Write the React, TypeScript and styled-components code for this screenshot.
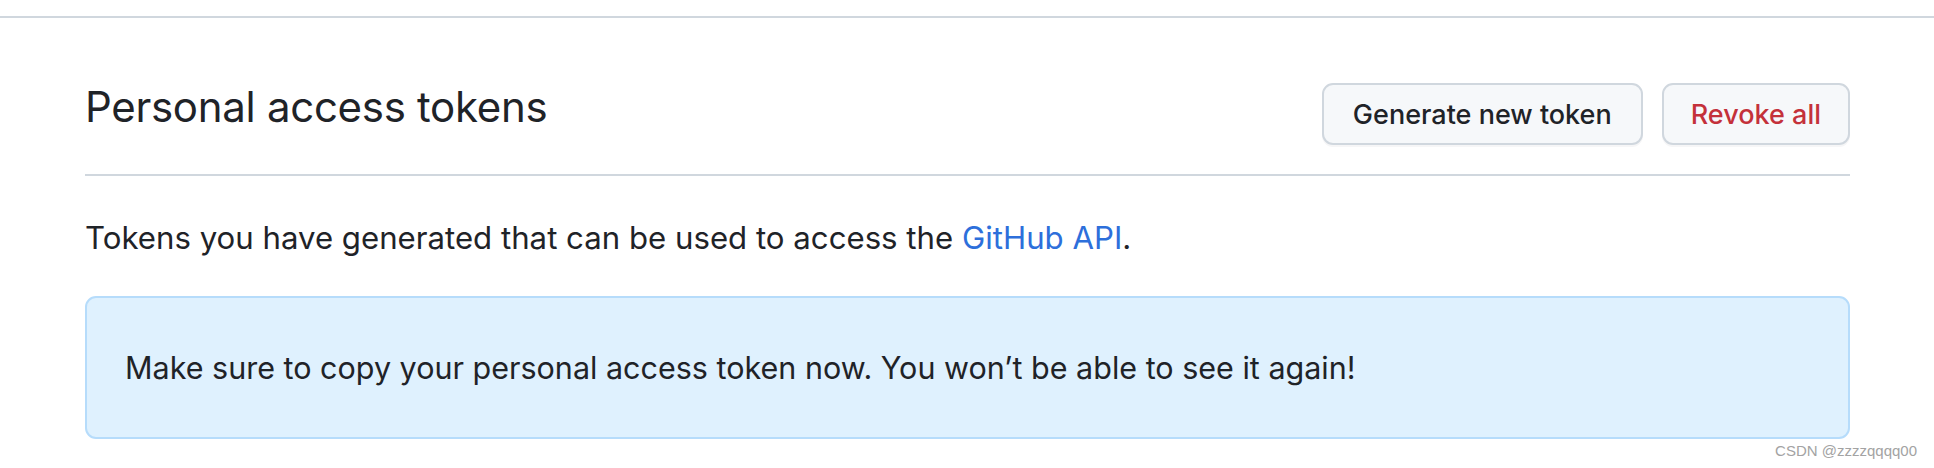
import React from 'react';
import styled, { createGlobalStyle } from 'styled-components';

const GlobalStyle = createGlobalStyle`
  html, body {
    margin: 0;
    padding: 0;
    background: #ffffff;
  }
  body {
    font-family: Inter, "Noto Sans", "Liberation Sans", sans-serif;
    color: #1f2328;
  }
`;

const Page = styled.div`
  position: relative;
  width: 1934px;
  height: 468px;
  overflow: hidden;
  background: #ffffff;
`;

const TopBar = styled.div`
  height: 16px;
  border-bottom: 2px solid #d0d7de;
`;

const Content = styled.main`
  width: 1765px;
  margin-left: 85px;
`;

const Subhead = styled.div`
  display: flex;
  justify-content: space-between;
  align-items: flex-start;
  padding-top: 61px;
  padding-bottom: 29px;
  border-bottom: 2px solid #d0d7de;
`;

const Heading = styled.h2`
  margin: 0;
  font-size: 42px;
  line-height: 56px;
  font-weight: 400;
  letter-spacing: -0.3px;
  color: #1f2328;
`;

const Actions = styled.div`
  display: flex;
  gap: 19px;
  padding-top: 4px;
`;

const Button = styled.button<{ $danger?: boolean }>`
  height: 62px;
  padding: 0 ${(p) => (p.$danger ? '27px' : '29px')};
  font-family: inherit;
  font-size: 27px;
  font-weight: 500;
  color: ${(p) => (p.$danger ? '#c4313a' : '#1f2328')};
  background: #f6f8fa;
  border: 2px solid #d0d7de;
  border-radius: 11px;
  box-shadow: 0 2px 0 rgba(31, 35, 40, 0.04);
  cursor: pointer;
`;

const Lead = styled.p`
  margin: 41px 0 0;
  font-size: 31.2px;
  line-height: 43px;
`;

const Link = styled.a`
  color: #2d6fdb;
  text-decoration: none;
`;

const Flash = styled.div`
  margin-top: 36px;
  padding: 48px 38px;
  background: #dff1fe;
  border: 2px solid #b6dcfb;
  border-radius: 11px;
  font-size: 30.5px;
  line-height: 43px;
`;

const Watermark = styled.span`
  position: absolute;
  right: 17px;
  bottom: 9px;
  font-family: "Liberation Sans", Arial, sans-serif;
  font-size: 15px;
  color: #a3a3a3;
`;

const App: React.FC = () => {
  return (
    <Page>
      <GlobalStyle />
      <TopBar />
      <Content>
        <Subhead>
          <Heading>Personal access tokens</Heading>
          <Actions>
            <Button>Generate new token</Button>
            <Button $danger>Revoke all</Button>
          </Actions>
        </Subhead>
        <Lead>
          Tokens you have generated that can be used to access the <Link href="#">GitHub API</Link>.
        </Lead>
        <Flash>Make sure to copy your personal access token now. You won’t be able to see it again!</Flash>
      </Content>
      <Watermark>CSDN @zzzzqqqq00</Watermark>
    </Page>
  );
};

export default App;
